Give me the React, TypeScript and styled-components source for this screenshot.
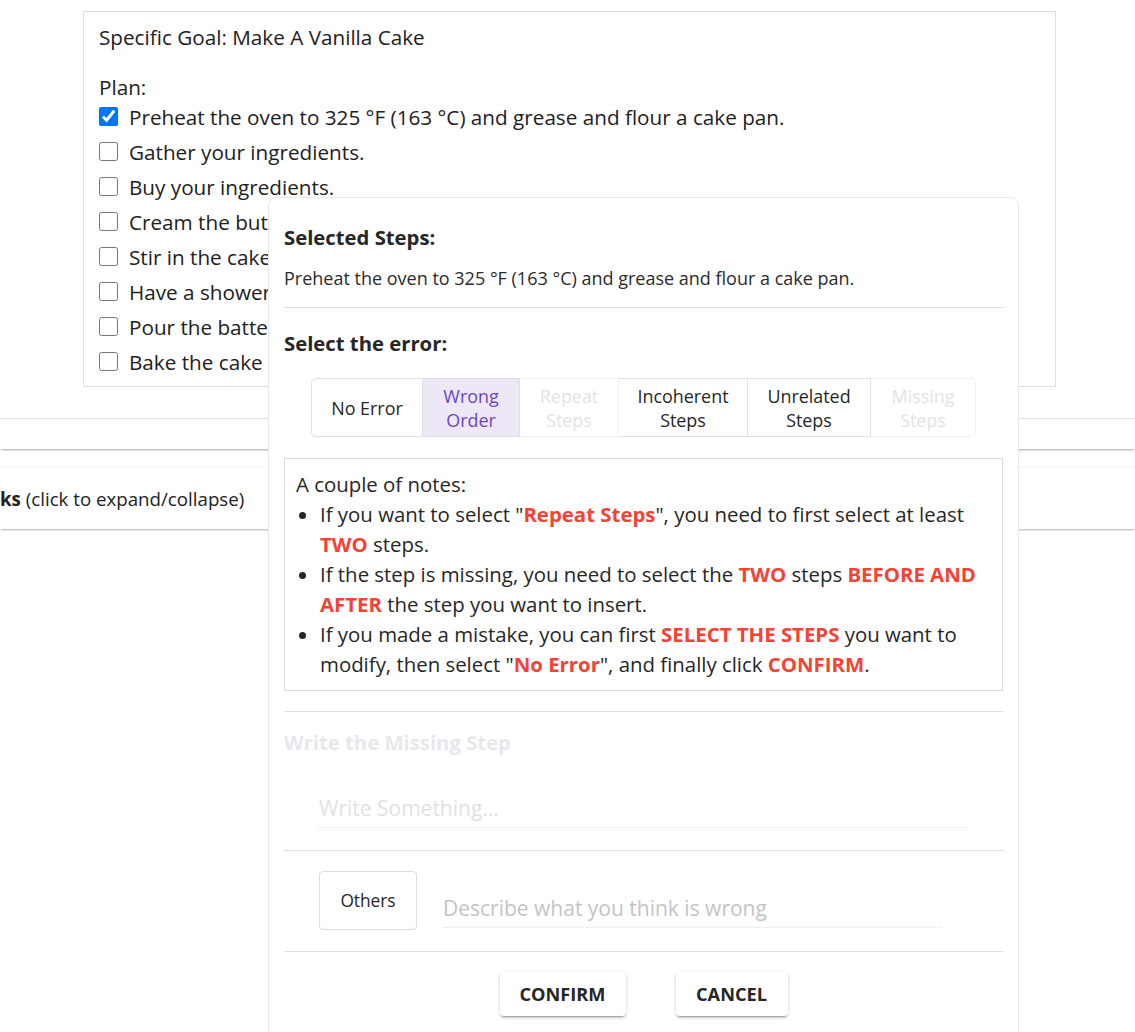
import React from "react";
import styled, { createGlobalStyle } from "styled-components";

const Global = createGlobalStyle`
  html, body { margin: 0; padding: 0; background: #fff; }
  body {
    width: 1135px;
    height: 1032px;
    overflow: hidden;
    font-family: "Open Sans", "Noto Sans", sans-serif;
    color: #212121;
  }
  * { box-sizing: border-box; }
`;

const Page = styled.div`
  position: relative;
  width: 1135px;
  height: 1032px;
  overflow: hidden;
  padding-top: 11px;
`;

const PlanCard = styled.section`
  margin-left: 83px;
  width: 973px;
  border: 1px solid #dedede;
  padding: 13px 15px 7px;
  font-size: 20.7px;
`;

const Goal = styled.div`
  line-height: 24px;
`;

const PlanLabel = styled.div`
  margin-top: 26px;
  line-height: 24px;
`;

const StepRow = styled.label`
  display: flex;
  align-items: center;
  height: 35px;
  gap: 11px;
  white-space: nowrap;
`;

const Box = styled.input`
  width: 19px;
  height: 19px;
  margin: 0;
  flex: none;
  accent-color: #0075ff;
`;

const BarOne = styled.div`
  margin-top: 31px;
  height: 31px;
  border-top: 1px solid #e0e0e0;
  box-shadow: 0 2px 2px -1px rgba(0, 0, 0, 0.35);
`;

const BarTwo = styled.div`
  margin-top: 19px;
  height: 61px;
  display: flex;
  align-items: center;
  box-shadow: 0 2px 2px -1px rgba(0, 0, 0, 0.3), 0 -1px 3px rgba(0, 0, 0, 0.06);
  font-size: 18.7px;
  color: #222;
  padding-bottom: 1px;
  b { font-weight: 700; }
`;

const Popover = styled.div`
  position: absolute;
  left: 268px;
  top: 197px;
  width: 751px;
  height: 880px;
  background: #fff;
  border: 1px solid #e9e9e9;
  border-radius: 8px;
  padding: 0 15px;
  box-shadow: 0 0 3px rgba(0, 0, 0, 0.03);
`;

const Heading = styled.h3<{ $top: number; $muted?: boolean }>`
  margin: ${(p) => p.$top}px 0 0;
  font-size: 20.3px;
  line-height: 24px;
  font-weight: 700;
  color: ${(p) => (p.$muted ? "#e7e7ec" : "#262626")};
`;

const Selected = styled.p`
  margin: 17px 0 0;
  font-size: 18px;
  line-height: 24px;
  color: #2b2b2b;
  white-space: nowrap;
`;

const Divider = styled.hr<{ $top: number }>`
  margin: ${(p) => p.$top}px 0 0;
  border: 0;
  border-top: 1px solid #e0e0e0;
  height: 0;
`;

const ToggleGroup = styled.div`
  margin: 23px auto 0;
  display: flex;
  width: max-content;
  height: 59px;
  border-radius: 5px;
`;

const Toggle = styled.button<{ $state: "normal" | "selected" | "disabled"; $w: number }>`
  width: ${(p) => p.$w}px;
  font-family: inherit;
  font-size: 17.9px;
  line-height: 24px;
  padding: 0;
  background: ${(p) => (p.$state === "selected" ? "#ede7f6" : "#fff")};
  color: ${(p) =>
    p.$state === "selected" ? "#6f45bd" : p.$state === "disabled" ? "#e3e3e3" : "#262626"};
  border: 1px solid ${(p) => (p.$state === "disabled" ? "#f1f1f1" : "#e0e0e0")};
  border-left-width: 0;
  &:first-child {
    border-left-width: 1px;
    border-radius: 5px 0 0 5px;
  }
  &:last-child {
    border-radius: 0 5px 5px 0;
  }
`;

const Notes = styled.div`
  margin-top: 21px;
  border: 1px solid #dcdcdc;
  padding: 10px 11px 11px;
  font-size: 20.4px;
  line-height: 30px;
  color: #262626;
`;

const NoteList = styled.ul`
  margin: 0;
  padding-left: 24px;
`;

const Hot = styled.b`
  color: #f44336;
  font-weight: 700;
`;

const LineInput = styled.input<{ $w: number }>`
  display: block;
  width: ${(p) => p.$w}px;
  height: 39px;
  border: 0;
  border-bottom: 1px dotted #e2e2e2;
  outline: none;
  padding: 0;
  font-family: inherit;
  font-size: 21px;
  color: #333;
  background: transparent;
  &::placeholder { color: #c4c4c4; }
  &:disabled::placeholder { color: #e2e2e6; }
`;

const MissingInputWrap = styled.div`
  margin: 35px 0 0 35px;
`;

const OthersRow = styled.div`
  margin: 20px 0 0 35px;
  display: flex;
  align-items: flex-end;
  gap: 26px;
`;

const OthersButton = styled.button`
  width: 98px;
  height: 59px;
  background: #fff;
  border: 1px solid #dcdcdc;
  border-radius: 4px;
  font-family: inherit;
  font-size: 17.3px;
  color: #262626;
`;

const DescribeWrap = styled.div`
  margin-bottom: 2px;
`;

const Actions = styled.div`
  margin-top: 20px;
  display: flex;
  justify-content: center;
  gap: 50px;
`;

const ActionButton = styled.button<{ $w: number }>`
  width: ${(p) => p.$w}px;
  height: 44px;
  background: #fff;
  border: 0;
  border-radius: 4px;
  font-family: inherit;
  font-size: 18.2px;
  font-weight: 700;
  color: #262626;
  box-shadow: 0 3px 1px -2px rgba(0, 0, 0, 0.2), 0 2px 2px 0 rgba(0, 0, 0, 0.14),
    0 1px 5px 0 rgba(0, 0, 0, 0.12);
`;

const steps = [
  "Preheat the oven to 325 °F (163 °C) and grease and flour a cake pan.",
  "Gather your ingredients.",
  "Buy your ingredients.",
  "Cream the butter and sugar together in a large bowl.",
  "Stir in the cake flour, baking powder and milk.",
  "Have a shower.",
  "Pour the batter into the prepared pan.",
  "Bake the cake for 30 to 40 minutes.",
];

const toggles: { label: [string, string] | [string]; state: "normal" | "selected" | "disabled"; w: number }[] = [
  { label: ["No Error"], state: "normal", w: 112 },
  { label: ["Wrong", "Order"], state: "selected", w: 97 },
  { label: ["Repeat", "Steps"], state: "disabled", w: 99 },
  { label: ["Incoherent", "Steps"], state: "normal", w: 129 },
  { label: ["Unrelated", "Steps"], state: "normal", w: 123 },
  { label: ["Missing", "Steps"], state: "disabled", w: 105 },
];

export default function App() {
  return (
    <>
      <Global />
      <Page>
        <PlanCard>
          <Goal>Specific Goal: Make A Vanilla Cake</Goal>
          <PlanLabel>Plan:</PlanLabel>
          {steps.map((s, i) => (
            <StepRow key={s}>
              <Box type="checkbox" defaultChecked={i === 0} />
              <span>{s}</span>
            </StepRow>
          ))}
        </PlanCard>
        <BarOne />
        <BarTwo>
          <span>
            <b>ks</b> (click to expand/collapse)
          </span>
        </BarTwo>

        <Popover>
          <Heading $top={27}>Selected Steps:</Heading>
          <Selected>{steps[0]}</Selected>
          <Divider $top={17} />
          <Heading $top={23}>Select the error:</Heading>
          <ToggleGroup>
            {toggles.map((t) => (
              <Toggle key={t.label.join(" ")} $state={t.state} $w={t.w} disabled={t.state === "disabled"}>
                {t.label[0]}
                {t.label[1] && (
                  <>
                    <br />
                    {t.label[1]}
                  </>
                )}
              </Toggle>
            ))}
          </ToggleGroup>
          <Notes>
            A couple of notes:
            <NoteList>
              <li>
                If you want to select "<Hot>Repeat Steps</Hot>", you need to first select at least{" "}
                <Hot>TWO</Hot> steps.
              </li>
              <li>
                If the step is missing, you need to select the <Hot>TWO</Hot> steps{" "}
                <Hot>BEFORE AND AFTER</Hot> the step you want to insert.
              </li>
              <li>
                If you made a mistake, you can first <Hot>SELECT THE STEPS</Hot> you want to modify, then
                select "<Hot>No Error</Hot>", and finally click <Hot>CONFIRM</Hot>.
              </li>
            </NoteList>
          </Notes>
          <Divider $top={20} />
          <Heading $top={18} $muted>
            Write the Missing Step
          </Heading>
          <MissingInputWrap>
            <LineInput $w={648} placeholder="Write Something..." disabled />
          </MissingInputWrap>
          <Divider $top={22} />
          <OthersRow>
            <OthersButton>Others</OthersButton>
            <DescribeWrap>
              <LineInput $w={499} placeholder="Describe what you think is wrong" />
            </DescribeWrap>
          </OthersRow>
          <Divider $top={21} />
          <Actions>
            <ActionButton $w={126}>CONFIRM</ActionButton>
            <ActionButton $w={112}>CANCEL</ActionButton>
          </Actions>
        </Popover>
      </Page>
    </>
  );
}
